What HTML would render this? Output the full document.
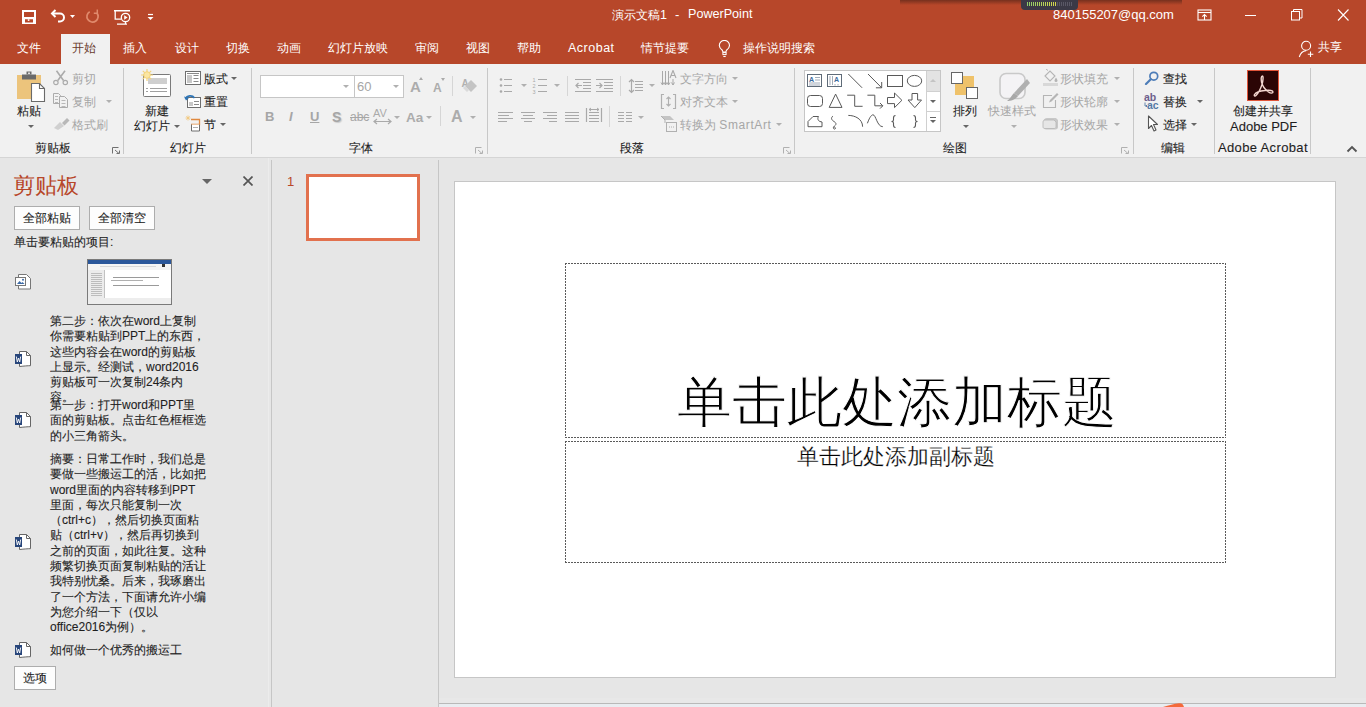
<!DOCTYPE html>
<html><head><meta charset="utf-8">
<style>
*{box-sizing:border-box;margin:0;padding:0}
html,body{width:1366px;height:707px;overflow:hidden;background:#e6e6e6;font-family:"Liberation Sans",sans-serif;font-size:12px;color:#444}
.a{position:absolute;white-space:nowrap;line-height:1}
#title{position:absolute;left:0;top:0;width:1366px;height:64px;background:#b7472a}
#ribbon{position:absolute;left:0;top:64px;width:1366px;height:94px;background:#f1f1f1;border-bottom:1px solid #d5d5d5}
.w{color:#fff}
.sep{position:absolute;width:1px;background:#c8c8c8}
.dis{color:#a6a6a6}
.dk{color:#1e1e1e;-webkit-text-stroke:.1px #1e1e1e}
.arr{position:absolute;width:0;height:0;border-left:3px solid transparent;border-right:3px solid transparent;border-top:3px solid #666}
.arr.d{border-top-color:#b0b0b0}
</style></head><body>
<!-- ===== TITLE BAR ===== -->
<div id="title">
 <!-- save -->
 <svg class="a" style="left:22px;top:10px" width="14" height="14" viewBox="0 0 14 14"><path fill="#fff" fill-rule="evenodd" d="M0 0h14v14H0z M2 2v5h10V2z M3 9.3h8v3.2H3z"/><rect x="5.8" y="9.3" width="1.6" height="1.6" fill="#fff"/></svg>
 <!-- undo -->
 <svg class="a" style="left:49px;top:8px" width="28" height="16" viewBox="0 0 28 16"><path d="M3 5.5h8a4 4 0 0 1 0 8H9" fill="none" stroke="#fff" stroke-width="2"/><path d="M6.5 2L3 5.5 6.5 9" fill="none" stroke="#fff" stroke-width="2"/><path d="M21 7h5l-2.5 3z" fill="#fff"/></svg>
 <!-- redo faded -->
 <svg class="a" style="left:85px;top:8px" width="16" height="16" viewBox="0 0 16 16"><path d="M4.7 3.65A5.6 5.6 0 1 0 11.8 4.9" fill="none" stroke="#e08a6c" stroke-width="1.7"/><path d="M12.3 1.5v3.8H8.8" fill="none" stroke="#e08a6c" stroke-width="1.5"/></svg>
 <!-- present -->
 <svg class="a" style="left:113px;top:8px" width="20" height="18" viewBox="0 0 20 18"><path d="M1 2.75h16" stroke="#fff" stroke-width="1.5"/><path d="M2.2 3v8.2H8" fill="none" stroke="#fff" stroke-width="1.3"/><circle cx="12.5" cy="9.5" r="4.2" fill="none" stroke="#fff" stroke-width="1.3"/><path d="M11.2 7.3v4.4l3.4-2.2z" fill="#fff"/><path d="M4 16.2h10M12.5 13.5v2.5" stroke="#fff" stroke-width="1.3"/></svg>
 <!-- customize -->
 <svg class="a" style="left:146px;top:12px" width="8" height="9" viewBox="0 0 8 9"><path d="M2 2.5h5" stroke="#fff" stroke-width="1.2"/><path d="M1.5 5h6l-3 3z" fill="#fff"/></svg>
 <div class="a w" style="left:612px;top:9px;font-size:12px">演示文稿<span style="font-size:12.5px">1</span></div><div class="a w" style="left:675px;top:8px;font-size:13px">-</div><div class="a w" style="left:688px;top:8px;font-size:12.6px">PowerPoint</div>
 <!-- dark popup at top -->
 <div class="a" style="left:900px;top:0;width:282px;height:5px;background:linear-gradient(rgba(40,20,15,.45),rgba(40,20,15,0))"></div>
 <div class="a" style="left:1021px;top:0;width:57px;height:10px;background:#3b3946;border-radius:0 0 4px 4px"></div>
 <div class="a" style="left:1027px;top:2px;width:30px;height:4px;background:repeating-linear-gradient(90deg,rgba(0,0,0,0) 0 1px,rgba(59,57,70,1) 1px 2px),linear-gradient(90deg,#8ccf6a,#d9d64a)"></div>
 <div class="a" style="left:1057px;top:2px;width:15px;height:4px;background:repeating-linear-gradient(90deg,#5a5866 0 1px,#3b3946 1px 2px)"></div>
 <div class="a w" style="left:1053px;top:8px;font-size:13px">840155207@qq.com</div>
 <!-- ribbon display options -->
 <svg class="a" style="left:1197px;top:9px" width="15" height="12" viewBox="0 0 15 12"><rect x="1" y="1" width="13" height="10" fill="none" stroke="#fff" stroke-width="1.1"/><path d="M1 3.5h13" stroke="#fff" stroke-width="1.1"/><path d="M7.5 11V5.5M5.3 7.7L7.5 5.5 9.7 7.7" fill="none" stroke="#fff" stroke-width="1.1"/></svg>
 <div class="a" style="left:1245px;top:15px;width:11px;height:1px;background:#fff"></div>
 <svg class="a" style="left:1291px;top:9px" width="12" height="12" viewBox="0 0 12 12"><rect x="0.5" y="2.5" width="8" height="8.5" fill="none" stroke="#fff"/><path d="M2.5 2.5v-2h8.5v8.5h-2.5" fill="none" stroke="#fff"/></svg>
 <svg class="a" style="left:1337px;top:9px" width="12" height="12" viewBox="0 0 12 12"><path d="M1 0.5l10.5 11M11.5 0.5L1 11.5" stroke="#fff" stroke-width="1.1"/></svg>
 <!-- tabs -->
 <div class="a w" style="left:17px;top:42px">文件</div>
 <div class="a" style="left:61px;top:34px;width:49px;height:30px;background:#f1f1f1"></div>
 <div class="a" style="left:72px;top:42px;color:#6a3b2c">开始</div>
 <div class="a w" style="left:123px;top:42px">插入</div>
 <div class="a w" style="left:175px;top:42px">设计</div>
 <div class="a w" style="left:226px;top:42px">切换</div>
 <div class="a w" style="left:277px;top:42px">动画</div>
 <div class="a w" style="left:328px;top:42px">幻灯片放映</div>
 <div class="a w" style="left:415px;top:42px">审阅</div>
 <div class="a w" style="left:466px;top:42px">视图</div>
 <div class="a w" style="left:517px;top:42px">帮助</div>
 <div class="a w" style="left:568px;top:42px;font-size:12.5px;letter-spacing:.5px">Acrobat</div>
 <div class="a w" style="left:641px;top:42px">情节提要</div>
 <svg class="a" style="left:718px;top:40px" width="14" height="18" viewBox="0 0 14 18"><path d="M4.3 10.2C2.6 8.9 1.3 7.4 1.3 5.5a5.1 5.1 0 0 1 10.2 0c0 1.9-1.3 3.4-3 4.7L7.9 12H4.9z" fill="none" stroke="#fff" stroke-width="1.1"/><rect x="4.9" y="12.6" width="3.2" height="2" fill="none" stroke="#fff" stroke-width="1"/><path d="M5.3 16.5h2.4" stroke="#fff" stroke-width="1.1"/></svg>
 <div class="a w" style="left:743px;top:42px">操作说明搜索</div>
 <svg class="a" style="left:1298px;top:40px" width="17" height="18" viewBox="0 0 17 18"><circle cx="8.1" cy="5.8" r="4.5" fill="none" stroke="#fff" stroke-width="1.1"/><path d="M1.3 17c1-3.5 3.5-6 6.8-6.4" fill="none" stroke="#fff" stroke-width="1.1"/><path d="M12.5 11.5v5.5M9.8 14.2h5.5" stroke="#fff" stroke-width="1.1"/></svg>
 <div class="a w" style="left:1318px;top:41px">共享</div>
</div>

<!-- ===== RIBBON ===== -->
<div id="ribbon"></div>
<div id="rb">
 <!-- Clipboard group -->
 <svg class="a" style="left:16px;top:70px" width="32" height="34" viewBox="0 0 32 34"><path d="M1 5h24v24H1z" fill="#ecc47c"/><path d="M6 4.5h14v5H6z" fill="#6a6a6a"/><path d="M10.5 1.5h5v3h-5z" fill="#6a6a6a"/><rect x="12" y="2.5" width="2" height="1.5" fill="#ddd"/><path d="M15.5 13.5h8l5 5v13h-13z" fill="#fff" stroke="#6a6a6a" stroke-width="1.1"/><path d="M23.5 13.5v5h5" fill="none" stroke="#6a6a6a" stroke-width="1.1"/></svg>
 <div class="a dk" style="left:17px;top:105px">粘贴</div>
 <div class="arr" style="left:28px;top:125px"></div>
 <svg class="a" style="left:53px;top:70px" width="16" height="16" viewBox="0 0 16 16"><circle cx="2.9" cy="12.5" r="2.2" fill="none" stroke="#ababab" stroke-width="1.2"/><circle cx="12.3" cy="12.5" r="2.2" fill="none" stroke="#ababab" stroke-width="1.2"/><path d="M3.5 0.8L10.5 10.5M12 0.8L4.8 10.5" stroke="#ababab" stroke-width="1.6"/></svg>
 <div class="a dis" style="left:72px;top:73px">剪切</div>
 <svg class="a" style="left:53px;top:93px" width="16" height="16" viewBox="0 0 16 16"><path d="M0.5 0.5h5l2 2v8h-7z" fill="#f1f1f1" stroke="#ababab"/><path d="M2 3.5h3M2 6.5h3M2 9.5h3" stroke="#b8b8b8"/><path d="M6.5 3.5h5l3 3v8h-8z" fill="#f1f1f1" stroke="#ababab"/><path d="M8.5 7.5h4M8.5 10.5h4M8.5 13.5h4" stroke="#b8b8b8"/></svg>
 <div class="a dis" style="left:72px;top:96px">复制</div>
 <div class="arr d" style="left:106px;top:100px"></div>
 <svg class="a" style="left:53px;top:117px" width="17" height="14" viewBox="0 0 17 14"><path d="M9 6l5-5 2.5 2.5-5 5z" fill="#b8b8b8"/><path d="M1 11l6-6 4 4-6 4z" fill="#d0d0d0"/></svg>
 <div class="a dis" style="left:72px;top:119px">格式刷</div>
 <div class="a dk" style="left:35px;top:142px">剪贴板</div>
 <svg class="a" style="left:112px;top:147px" width="8" height="7" viewBox="0 0 8 7"><path d="M0.5 6.5v-6h6" fill="none" stroke="#707070"/><path d="M3 3l4 3.5M7.5 3.5v3h-3" fill="none" stroke="#707070"/></svg>
 <div class="sep" style="left:123px;top:68px;height:86px"></div>
 <!-- Slides group -->
 <svg class="a" style="left:140px;top:68px" width="33" height="30" viewBox="0 0 33 30"><rect x="3.5" y="6.5" width="27" height="22" rx="1" fill="#fff" stroke="#7a7a7a"/><rect x="8" y="10" width="19" height="6" fill="#cfcfcf"/><path d="M6 20.5h2M10 20.5h17M6 23.5h2M10 23.5h17" stroke="#a0a0a0"/><path d="M7 1v12M1 7h12M2.8 2.8l8.4 8.4M11.2 2.8l-8.4 8.4" stroke="#f3d37a" stroke-width="1.2"/><circle cx="7" cy="7" r="3.3" fill="#fbe6a2" stroke="#f3d37a"/></svg>
 <div class="a dk" style="left:145px;top:105px">新建</div>
 <div class="a dk" style="left:134px;top:120px">幻灯片</div>
 <div class="arr" style="left:174px;top:125px"></div>
 <svg class="a" style="left:184px;top:70px" width="18" height="16" viewBox="0 0 18 16"><rect x="1.5" y="1.5" width="15" height="13" fill="#fff" stroke="#6e6e6e"/><rect x="3" y="5" width="5" height="8" fill="#c8c8c8"/><path d="M9.5 5.5h5M9.5 8.5h5M9.5 11.5h5M3 3.5h12" stroke="#8a8a8a"/></svg>
 <div class="a dk" style="left:204px;top:73px">版式</div>
 <div class="arr" style="left:231px;top:77px"></div>
 <svg class="a" style="left:184px;top:92px" width="18" height="17" viewBox="0 0 18 17"><rect x="3.5" y="5.5" width="13" height="10" fill="#fff" stroke="#6e6e6e"/><rect x="5" y="10" width="4" height="4" fill="#c8c8c8"/><path d="M10 9.5h5M10 12.5h5" stroke="#8a8a8a"/><path d="M1.5 7a5 4.5 0 0 1 9-1" fill="none" stroke="#2e75b6" stroke-width="1.6"/><path d="M0 4.5l2 4 3-2.5z" fill="#2e75b6"/></svg>
 <div class="a dk" style="left:204px;top:96px">重置</div>
 <svg class="a" style="left:184px;top:115px" width="18" height="17" viewBox="0 0 18 17"><path d="M7 4.5h8.5v5H7" fill="none" stroke="#e0893f" stroke-width="1.3"/><path d="M7.5 9.5v6.5h8v-6.5" fill="#fff" stroke="#6e6e6e"/><path d="M9 12.5h5" stroke="#b0b0b0"/><path d="M4 0.5v5M1.5 3h5M2.3 1.3l3.4 3.4M5.7 1.3L2.3 4.7" stroke="#f2c77a" stroke-width=".8"/></svg>
 <div class="a dk" style="left:204px;top:119px">节</div>
 <div class="arr" style="left:220px;top:123px"></div>
 <div class="a dk" style="left:170px;top:142px">幻灯片</div>
 <div class="sep" style="left:251px;top:68px;height:86px"></div>
 <!-- Font group -->
 <div class="a" style="left:260px;top:75px;width:95px;height:23px;background:#fff;border:1px solid #c6c6c6"></div>
 <div class="arr d" style="left:343px;top:85px"></div>
 <div class="a" style="left:354px;top:75px;width:50px;height:23px;background:#fff;border:1px solid #c6c6c6"></div>
 <div class="a" style="left:354px;top:75px;width:1px;height:23px;background:#c6c6c6"></div>
 <div class="a dis" style="left:357px;top:80px;font-size:13px">60</div>
 <div class="arr d" style="left:393px;top:85px"></div>
 <div class="a dis" style="left:410px;top:79px;font-size:15px;font-weight:bold;color:#acacac">A</div>
 <div class="a" style="left:419px;top:77px;width:0;height:0;border-left:2.5px solid transparent;border-right:2.5px solid transparent;border-bottom:3px solid #aaa"></div>
 <div class="a dis" style="left:433px;top:82px;font-size:12px;font-weight:bold;color:#acacac">A</div>
 <div class="a" style="left:441px;top:78px;width:0;height:0;border-left:2.5px solid transparent;border-right:2.5px solid transparent;border-top:3px solid #aaa"></div>
 <div class="sep" style="left:452px;top:76px;height:20px;background:#d6d6d6"></div>
 <svg class="a" style="left:461px;top:75px" width="18" height="20" viewBox="0 0 18 20"><text x="0.5" y="12" font-size="10" font-weight="bold" font-family="Liberation Sans" fill="#b0b0b0">A</text><path d="M10 5l6 6-6 6-6-6z" fill="#c4c4c4"/><path d="M4 11l4 4-2 2-4-4z" fill="#dadada"/></svg>
 <div class="a dis" style="left:265px;top:110px;font-size:13px;font-weight:bold">B</div>
 <div class="a dis" style="left:289px;top:110px;font-size:13px;font-style:italic;font-weight:bold">I</div>
 <div class="a dis" style="left:310px;top:110px;font-size:13px;font-weight:bold;text-decoration:underline">U</div>
 <div class="a dis" style="left:332px;top:110px;font-size:14px;font-weight:bold;text-shadow:1px 1px 1px #ccc">S</div>
 <div class="a dis" style="left:350px;top:111px;font-size:12px;text-decoration:line-through">abc</div>
 <svg class="a" style="left:372px;top:108px" width="21" height="17" viewBox="0 0 21 17"><text x="1" y="9" font-size="11" font-family="Liberation Sans" fill="#aaa">AV</text><path d="M2 13.5h17M5 11l-3 2.5 3 2.5M16 11l3 2.5-3 2.5" fill="none" stroke="#aaa" stroke-width="1.2"/></svg>
 <div class="arr d" style="left:394px;top:116px"></div>
 <div class="a dis" style="left:406px;top:111px;font-size:13.5px;font-weight:bold;color:#acacac">Aa</div>
 <div class="arr d" style="left:426px;top:116px"></div>
 <div class="sep" style="left:440px;top:106px;height:20px;background:#d6d6d6"></div>
 <div class="a dis" style="left:451px;top:109px;font-size:16px;font-weight:bold;color:#acacac">A</div>
 <div class="arr d" style="left:470px;top:116px"></div>
 <div class="a dk" style="left:349px;top:142px">字体</div>
 <svg class="a" style="left:475px;top:147px" width="8" height="7" viewBox="0 0 8 7"><path d="M0.5 6.5v-6h6" fill="none" stroke="#b0b0b0"/><path d="M3 3l4 3.5M7.5 3.5v3h-3" fill="none" stroke="#b0b0b0"/></svg>
 <div class="sep" style="left:487px;top:68px;height:86px"></div>
</div>

<div id="rb2">
 <!-- Paragraph group -->
 <svg class="a" style="left:0;top:0" width="660" height="136" viewBox="0 0 660 136">
 <g stroke="#a9a9a9" stroke-width="1" fill="none" shape-rendering="crispEdges"><path d="M504 79.5H512M504 85.5H512M504 91.5H512M538 79.5H547M538 85.5H547M538 91.5H547M575 79.5H591M583 82.5H591M583 85.5H591M583 88.5H591M575 91.5H591M596 79.5H613M604 82.5H613M604 85.5H613M604 88.5H613M596 91.5H613M635 81.5H643M635 84.5H643M635 87.5H643M635 90.5H643M498 112.5H513M498 115.5H509M498 118.5H513M498 121.5H507M521 112.5H535M523 115.5H533M521 118.5H535M524 121.5H532M543 112.5H557M547 115.5H557M543 118.5H557M549 121.5H557M565 112.5H579M565 115.5H579M565 118.5H579M565 121.5H579M589 112.5H599M589 115.5H599M589 118.5H599M589 121.5H599M618 112.5H624M626 112.5H632M618 115.5H624M626 115.5H632M618 118.5H624M626 118.5H632M618 121.5H624M626 121.5H632"/></g>
 <circle cx="501" cy="79.5" r="1.3" fill="#a9a9a9"/><circle cx="501" cy="85.5" r="1.3" fill="#a9a9a9"/><circle cx="501" cy="91.5" r="1.3" fill="#a9a9a9"/>
 <text x="532.5" y="82" font-size="5.5" font-family="Liberation Sans" fill="#a9a9a9">1</text><text x="532.5" y="88" font-size="5.5" font-family="Liberation Sans" fill="#a9a9a9">2</text><text x="532.5" y="94" font-size="5.5" font-family="Liberation Sans" fill="#a9a9a9">3</text>
 <g stroke="#a9a9a9" stroke-width="1.2" fill="none"><path d="M576 85.5h6M578.5 83l-2.5 2.5 2.5 2.5"/><path d="M596 85.5h6M599.5 83l2.5 2.5-2.5 2.5"/>
 <path d="M631.5 79.5v13M629 82l2.5-2.5 2.5 2.5M629 90l2.5 2.5 2.5-2.5"/>
 <path d="M586.5 108v14M601.5 108v14"/><path d="M589 109.5h10M591 108l-2 1.5 2 1.5M597 108l2 1.5-2 1.5" stroke-width="1"/></g>
</svg>
 <div class="arr d" style="left:521px;top:84px"></div>
 <div class="arr d" style="left:554px;top:84px"></div>
 <div class="sep" style="left:567px;top:76px;height:20px;background:#d6d6d6"></div>
 <div class="sep" style="left:620px;top:76px;height:20px;background:#d6d6d6"></div>
 <div class="arr d" style="left:649px;top:84px"></div>
 <div class="sep" style="left:609px;top:106px;height:21px;background:#d6d6d6"></div>
 <div class="arr d" style="left:638px;top:116px"></div>
 <svg class="a" style="left:660px;top:70px" width="17" height="16" viewBox="0 0 17 16"><path d="M2.5 1v14M5.5 1v14M8.5 1v14M13 9v6" stroke="#a9a9a9" stroke-width="1"/><path d="M1 12.5l1.5 2.5 1.5-2.5M4 12.5l1.5 2.5 1.5-2.5M7 12.5l1.5 2.5 1.5-2.5M11.5 12.5l1.5 2.5 1.5-2.5" fill="none" stroke="#a9a9a9"/><path d="M10 8l3-7.5 3 7.5M11 5.5h4" fill="none" stroke="#a9a9a9" stroke-width="1.1"/></svg>
 <div class="a dis" style="left:680px;top:73px">文字方向</div>
 <div class="arr d" style="left:732px;top:77px"></div>
 <svg class="a" style="left:660px;top:93px" width="17" height="17" viewBox="0 0 17 17"><path d="M4 1.5H1.5v14H4M13 1.5h2.5v14H13" fill="none" stroke="#b0b0b0" stroke-width="1.2"/><path d="M8.5 4v9M6.5 6L8.5 4l2 2M6.5 11l2 2 2-2" fill="none" stroke="#b0b0b0" stroke-width="1.1"/></svg>
 <div class="a dis" style="left:680px;top:96px">对齐文本</div>
 <div class="arr d" style="left:732px;top:100px"></div>
 <svg class="a" style="left:660px;top:115px" width="18" height="17" viewBox="0 0 18 17"><path d="M1 1h9l4 4H5z" fill="#c4c4c4"/><path d="M1 1l4 4v3" fill="none" stroke="#b0b0b0"/><rect x="6.5" y="7.5" width="10" height="9" fill="#f1f1f1" stroke="#b0b0b0"/><path d="M9 12h5" stroke="#b0b0b0" stroke-dasharray="1 1"/></svg>
 <div class="a dis" style="left:680px;top:119px">转换为 <span style="letter-spacing:.6px">SmartArt</span></div>
 <div class="arr d" style="left:776px;top:123px"></div>
 <div class="a dk" style="left:620px;top:142px">段落</div>
 <svg class="a" style="left:783px;top:147px" width="8" height="7" viewBox="0 0 8 7"><path d="M0.5 6.5v-6h6" fill="none" stroke="#b0b0b0"/><path d="M3 3l4 3.5M7.5 3.5v3h-3" fill="none" stroke="#b0b0b0"/></svg>
 <div class="sep" style="left:794px;top:68px;height:86px"></div>
 <!-- Drawing group -->
 <div class="a" style="left:804px;top:70px;width:137px;height:62px;background:#fff;border:1px solid #c6c6c6"></div>
 <div class="a" style="left:926px;top:71px;width:14px;height:20px;background:#e3e3e3;border-left:1px solid #d0d0d0"></div>
 <div class="a" style="left:926px;top:91px;width:14px;height:20px;background:#fff;border-left:1px solid #d0d0d0;border-top:1px solid #d0d0d0"></div>
 <div class="a" style="left:926px;top:111px;width:14px;height:20px;background:#fff;border-left:1px solid #d0d0d0;border-top:1px solid #d0d0d0"></div>
 <div class="a" style="left:930px;top:79px;width:0;height:0;border-left:3px solid transparent;border-right:3px solid transparent;border-bottom:3px solid #c4c4c4"></div>
 <div class="arr" style="left:930px;top:100px"></div>
 <div class="a" style="left:930px;top:117px;width:6px;height:1px;background:#666"></div>
 <div class="arr" style="left:930px;top:120px"></div>
 <svg class="a" style="left:806px;top:72px" width="120" height="58" viewBox="0 0 120 58" fill="none" stroke="#595959" stroke-width="1">
  <rect x="1.5" y="2.5" width="14" height="12" stroke="#5f6b78"/><text x="3" y="9.5" font-size="7" font-weight="bold" font-family="Liberation Sans" fill="#3d6a9e" stroke="none">A</text><path d="M9 5.5h5M9 8h5M3 11h11M3 13h11" stroke="#8a98a8" stroke-width=".8"/>
  <rect x="21.5" y="2.5" width="14" height="12" stroke="#5f6b78"/><path d="M24 4v9M26.5 4v9" stroke="#8a98a8" stroke-width=".8"/><text x="28" y="9.5" font-size="7" font-weight="bold" font-family="Liberation Sans" fill="#3d6a9e" stroke="none">A</text><path d="M29 12v1.5M32 12v1.5" stroke="#8a98a8" stroke-width=".8"/>
  <path d="M42.3 2l13.8 13.8"/>
  <path d="M62 2l13.7 13.8M75.7 10v5.8h-5.8"/>
  <rect x="81.5" y="3.5" width="15" height="11"/>
  <ellipse cx="108.5" cy="8.9" rx="7.2" ry="5.5"/>
  <rect x="1.5" y="23.5" width="15" height="11" rx="3"/>
  <path d="M29.6 22.1L23.2 35.4H36z"/>
  <path d="M41.2 23.2h7.5v11.1h7.9"/>
  <path d="M61.4 23.2h7.4v10.6h8M74 31l2.8 2.8-2.8 2.8"/>
  <path d="M81.5 25.5h7V21l7.4 7.3-7.4 7.3v-4h-7z"/>
  <path d="M106 21.5h5.6v6.5h3.9l-6.7 7.6-6.8-7.6h4z"/>
  <path d="M2 49.5L7 44.5h5.5c-1 1.5-1 4 1.5 5l2 .5v4.7H2z"/>
  <path d="M27 44c-2.5 2-1.5 4 1 5.5s2.5 3 .5 4.5-1 3.5.5 3-.5-3-1.5-1.5"/>
  <path d="M42.3 43.4c6.7 0 14.3 3.6 14.3 11.3"/>
  <path d="M61.4 51.3c2.6-7.3 4.6-8.5 5.6-8.5 3 0 4 11.9 9.8 11.9"/>
  <path d="M89.5 43.5c-2 0-2 1-2 2.5v2c0 1-1 1.5-2 1.5 1 0 2 .5 2 1.5v2c0 1.5 0 2.5 2 2.5" stroke-width="1.1"/>
  <path d="M107.5 43.5c2 0 2 1 2 2.5v2c0 1 1 1.5 2 1.5-1 0-2 .5-2 1.5v2c0 1.5 0 2.5-2 2.5" stroke-width="1.1"/>
 </svg>
 <svg class="a" style="left:950px;top:71px" width="29" height="29" viewBox="0 0 29 29"><rect x="5" y="5" width="19" height="19" fill="#efc26a"/><rect x="1.5" y="1.5" width="11" height="11" fill="#fff" stroke="#666"/><rect x="16.5" y="16.5" width="11" height="11" fill="#fff" stroke="#666"/></svg>
 <div class="a dk" style="left:953px;top:105px">排列</div>
 <div class="arr" style="left:963px;top:125px"></div>
 <svg class="a" style="left:997px;top:71px" width="36" height="32" viewBox="0 0 36 32"><rect x="3" y="2.5" width="25" height="25" rx="6" fill="#f4f3f5" stroke="#c9c9c9" stroke-width="1.6"/><path d="M30 8l3 4-12 13-4-3z" fill="#b0b0b0"/><path d="M17 22l4 3c-3 4-7 5-11 5 3-2 5-6 7-8z" fill="#a8a8a8"/></svg>
 <div class="a dis" style="left:988px;top:105px">快速样式</div>
 <div class="arr d" style="left:1011px;top:125px"></div>
 <svg class="a" style="left:1042px;top:69px" width="17" height="17" viewBox="0 0 17 17"><path d="M3 7l5-5 5 5-5 5z" fill="#f1f1f1" stroke="#b5b5b5" stroke-width="1.1"/><path d="M6 1.5L4 0" stroke="#b5b5b5"/><path d="M14 8.5c1 1.5 1.5 2.5 1.5 3a1.5 1.5 0 0 1-3 0c0-.5.5-1.5 1.5-3z" fill="#b5b5b5"/><rect x="1" y="14" width="15" height="3" fill="#d8d8d8"/></svg>
 <div class="a dis" style="left:1060px;top:73px">形状填充</div>
 <div class="arr d" style="left:1114px;top:77px"></div>
 <svg class="a" style="left:1042px;top:92px" width="17" height="17" viewBox="0 0 17 17"><path d="M10 3.5H1.5v12h12V8" fill="none" stroke="#b5b5b5" stroke-width="1.1"/><path d="M15 1l1.5 1.5-7 7-2.5 1 1-2.5z" fill="#b5b5b5"/></svg>
 <div class="a dis" style="left:1060px;top:96px">形状轮廓</div>
 <div class="arr d" style="left:1114px;top:100px"></div>
 <svg class="a" style="left:1042px;top:116px" width="17" height="15" viewBox="0 0 17 15"><path d="M5 2h9l2 2v7c0 1.5-1 2.5-2.5 2.5H4.5C2 13.5 1 12 1 10V6c0-2 2-4 4-4z" fill="#c8c8c8"/><path d="M3 4h9l2 2v5c0 1-1 1.5-2 1.5H3c-1 0-2-.5-2-1.5V6c0-1 1-2 2-2z" fill="#e6e6e6" stroke="#b5b5b5" stroke-width=".8"/></svg>
 <div class="a dis" style="left:1060px;top:119px">形状效果</div>
 <div class="arr d" style="left:1114px;top:123px"></div>
 <div class="a dk" style="left:943px;top:142px">绘图</div>
 <svg class="a" style="left:1121px;top:147px" width="8" height="7" viewBox="0 0 8 7"><path d="M0.5 6.5v-6h6" fill="none" stroke="#b0b0b0"/><path d="M3 3l4 3.5M7.5 3.5v3h-3" fill="none" stroke="#b0b0b0"/></svg>
 <div class="sep" style="left:1133px;top:68px;height:86px"></div>
 <!-- Editing -->
 <svg class="a" style="left:1144px;top:71px" width="15" height="14" viewBox="0 0 15 14"><circle cx="9.8" cy="5.2" r="3.9" fill="none" stroke="#4d7db8" stroke-width="1.7"/><path d="M6.8 8.2L2 13" stroke="#4d7db8" stroke-width="2.2" stroke-linecap="round"/></svg>
 <div class="a dk" style="left:1163px;top:73px">查找</div>
 <svg class="a" style="left:1143px;top:92px" width="19" height="18" viewBox="0 0 19 18"><text x="1" y="8.5" font-size="10.5" font-weight="bold" font-family="Liberation Sans" fill="#6d5e8c">ab</text><text x="4" y="16.5" font-size="10.5" font-weight="bold" font-family="Liberation Sans" fill="#557aa6">ac</text><path d="M2 10.5v3.5h2M3 13l1 1-1 1" fill="none" stroke="#557aa6" stroke-width=".9"/></svg>
 <div class="a dk" style="left:1163px;top:96px">替换</div>
 <div class="arr" style="left:1197px;top:100px"></div>
 <svg class="a" style="left:1147px;top:115px" width="11" height="17" viewBox="0 0 11 17"><path d="M1.5 1v12.5l3-3 2.5 5.5 2-1-2.5-5.5h4z" fill="#fff" stroke="#555" stroke-width="1.1" stroke-linejoin="round"/></svg>
 <div class="a dk" style="left:1163px;top:119px">选择</div>
 <div class="arr" style="left:1191px;top:123px"></div>
 <div class="a dk" style="left:1161px;top:142px">编辑</div>
 <div class="sep" style="left:1214px;top:68px;height:86px"></div>
 <!-- Acrobat -->
 <div class="a" style="left:1247px;top:70px;width:32px;height:31px;background:#2b0505;border:1px solid #e0553a"></div>
 <svg class="a" style="left:1250px;top:73px" width="26" height="26" viewBox="0 0 26 26"><path d="M12.5 3c-1.5 0-1.5 3-1 6 1 4 4 8 7 10 2 1.5 4.5 1.5 4.5 0S20 17 15 17.5 6 19 4.5 21.5c-.8 1.3.5 2 1.5 1 2-2 4.5-6.5 6-11 1-3 1.5-8.5.5-8.5z" fill="none" stroke="#f3d6cf" stroke-width="1.4"/></svg>
 <div class="a dk" style="left:1233px;top:105px">创建并共享</div>
 <div class="a dk" style="left:1230px;top:120px;font-size:13px">Adobe PDF</div>
 <div class="a dk" style="left:1218px;top:141px;font-size:13px;letter-spacing:.35px">Adobe Acrobat</div>
 <div class="sep" style="left:1310px;top:68px;height:86px"></div>
 <svg class="a" style="left:1346px;top:144px" width="12" height="10" viewBox="0 0 12 10"><path d="M1.5 7.5l4.5-4.5 4.5 4.5" fill="none" stroke="#555" stroke-width="1.9"/></svg>
</div>

<!-- panes -->
<div class="sep" style="left:271px;top:160px;height:547px;background:#c6c6c6"></div>
<div class="sep" style="left:438px;top:160px;height:547px;background:#c6c6c6"></div>
<div style="position:absolute;left:454px;top:181px;width:882px;height:497px;background:#fff;border:1px solid #c6c6c6"></div>
<!-- ===== CLIPBOARD PANE ===== -->
<div class="sep" style="left:268px;top:158px;height:549px;background:#ececec"></div>
<div class="a" style="left:13px;top:176px;font-size:21.5px;color:#b7472a">剪贴板</div>
<div class="a" style="left:202px;top:179px;width:0;height:0;border-left:5px solid transparent;border-right:5px solid transparent;border-top:5px solid #666"></div>
<svg class="a" style="left:243px;top:176px" width="10" height="10" viewBox="0 0 10 10"><path d="M0.5 0.5l9 9M9.5 0.5l-9 9" stroke="#555" stroke-width="1.7"/></svg>
<div class="a" style="left:14px;top:206px;width:66px;height:24px;background:#fdfdfd;border:1px solid #adadad"></div>
<div class="a dk" style="left:23px;top:212px">全部粘贴</div>
<div class="a" style="left:89px;top:206px;width:66px;height:24px;background:#fdfdfd;border:1px solid #adadad"></div>
<div class="a dk" style="left:98px;top:212px">全部清空</div>
<div class="a dk" style="left:14px;top:236px">单击要粘贴的项目:</div>
<!-- item 1 icon: picture -->
<svg class="a" style="left:14px;top:273px" width="18" height="17" viewBox="0 0 18 17"><path d="M4.5 1.5h8l4 4v10.5h-12z" fill="#fff" stroke="#777"/><rect x="1.5" y="4.5" width="10" height="8" fill="#fff" stroke="#777"/><path d="M3 11l2.5-3 2 2 1-1 2 2z" fill="#3c6aa6"/><circle cx="9" cy="6.8" r="1" fill="#3c6aa6"/></svg>
<!-- thumbnail screenshot -->
<div class="a" style="left:87px;top:259px;width:85px;height:46px;background:#fff;border:1px solid #7a7a7a"></div>
<div class="a" style="left:88px;top:260px;width:83px;height:4px;background:#2b579a"></div>
<div class="a" style="left:88px;top:264px;width:83px;height:6px;background:#f4f4f4"></div>
<div class="a" style="left:100px;top:266px;width:56px;height:1px;background:#d8d8d8"></div>
<div class="a" style="left:162px;top:264px;width:3px;height:3px;background:#333"></div>
<div class="a" style="left:88px;top:270px;width:17px;height:28px;background:#ececec;border-right:1px solid #c2c2c2"></div>
<div class="a" style="left:91px;top:273px;width:11px;height:24px;background:repeating-linear-gradient(#bdbdbd 0 1px,transparent 1px 2px)"></div>
<div class="a" style="left:113px;top:277px;width:46px;height:1px;background:#9a9a9a"></div>
<div class="a" style="left:111px;top:280px;width:32px;height:1px;background:#b0b0b0"></div>
<div class="a" style="left:113px;top:285px;width:46px;height:1px;background:#9a9a9a"></div>
<div class="a" style="left:88px;top:298px;width:83px;height:6px;background:#ededed"></div>
<!-- word icon -->
<svg width="0" height="0" style="position:absolute"><defs><g id="wd"><path d="M5.5 0.5h7l4 4v10.2c-3 0-6 .3-11 .8z" fill="#fff" stroke="#666"/><path d="M12.5 0.5v4h4" fill="none" stroke="#666"/><rect x="1" y="3" width="7" height="10" fill="#27457a"/><path d="M2.3 5.5l1 5.5 1.2-4 1.2 4 1-5.5" fill="none" stroke="#fff" stroke-width=".9"/></g></defs></svg>
<svg class="a" style="left:14px;top:351px" width="18" height="17"><use href="#wd"/></svg>
<svg class="a" style="left:14px;top:412px" width="18" height="17"><use href="#wd"/></svg>
<svg class="a" style="left:14px;top:534px" width="18" height="17"><use href="#wd"/></svg>
<svg class="a" style="left:14px;top:642px" width="18" height="17"><use href="#wd"/></svg>
<div class="a dk" style="left:50px;top:314px;line-height:15.3px;white-space:pre">第二步：依次在word上复制
你需要粘贴到PPT上的东西，
这些内容会在word的剪贴板
上显示。经测试，word2016
剪贴板可一次复制24条内
容。</div>
<div class="a dk" style="left:50px;top:398px;line-height:15.3px;white-space:pre">第一步：打开word和PPT里
面的剪贴板。点击红色框框选
的小三角箭头。</div>
<div class="a dk" style="left:50px;top:452px;line-height:15.3px;white-space:pre">摘要：日常工作时，我们总是
要做一些搬运工的活，比如把
word里面的内容转移到PPT
里面，每次只能复制一次
（ctrl+c），然后切换页面粘
贴（ctrl+v），然后再切换到
之前的页面，如此往复。这种
频繁切换页面复制粘贴的活让
我特别忧桑。后来，我琢磨出
了一个方法，下面请允许小编
为您介绍一下（仅以
office2016为例）。</div>
<div class="a dk" style="left:50px;top:644px">如何做一个优秀的搬运工</div>
<div class="a" style="left:14px;top:666px;width:42px;height:24px;background:#fdfdfd;border:1px solid #adadad"></div>
<div class="a dk" style="left:23px;top:672px">选项</div>
<!-- ===== THUMB PANE ===== -->
<div class="a" style="left:287px;top:175px;font-size:13px;color:#b7472a">1</div>
<div class="a" style="left:306px;top:174px;width:114px;height:67px;background:#fff;border:3px solid #e2714e"></div>
<!-- ===== SLIDE ===== -->
<div class="a" style="left:565px;top:263px;width:661px;height:1px;background:repeating-linear-gradient(90deg,#5a5a5a 0 2px,transparent 2px 3px)"></div><div class="a" style="left:565px;top:437px;width:661px;height:1px;background:repeating-linear-gradient(90deg,#5a5a5a 0 2px,transparent 2px 3px)"></div><div class="a" style="left:565px;top:263px;width:1px;height:175px;background:repeating-linear-gradient(180deg,#5a5a5a 0 2px,transparent 2px 3px)"></div><div class="a" style="left:1225px;top:263px;width:1px;height:175px;background:repeating-linear-gradient(180deg,#5a5a5a 0 2px,transparent 2px 3px)"></div>
<div class="a" style="left:565px;top:441px;width:661px;height:1px;background:repeating-linear-gradient(90deg,#5a5a5a 0 2px,transparent 2px 3px)"></div><div class="a" style="left:565px;top:562px;width:661px;height:1px;background:repeating-linear-gradient(90deg,#5a5a5a 0 2px,transparent 2px 3px)"></div><div class="a" style="left:565px;top:441px;width:1px;height:122px;background:repeating-linear-gradient(180deg,#5a5a5a 0 2px,transparent 2px 3px)"></div><div class="a" style="left:1225px;top:441px;width:1px;height:122px;background:repeating-linear-gradient(180deg,#5a5a5a 0 2px,transparent 2px 3px)"></div>
<div class="a" style="left:677px;top:375px;font-size:55px;color:#000;-webkit-text-stroke:1px #fff">单击此处添加标题</div>
<div class="a" style="left:797px;top:446px;font-size:22px;color:#000;-webkit-text-stroke:.25px #fff">单击此处添加副标题</div>
<!-- bottom status strip -->
<div class="a" style="left:439px;top:698px;width:927px;height:5px;background:#e8e8e8"></div><div class="a" style="left:439px;top:703px;width:927px;height:4px;background:#e9edf1;border-top:1px solid #b9b9b9"></div>
<svg class="a" style="left:1160px;top:702px" width="26" height="5" viewBox="0 0 26 5"><path d="M3 5C9 3.5 14 1.5 19 1.2 21.5 1 23 1.5 24 5z" fill="#f4693a"/></svg>

</body></html>
